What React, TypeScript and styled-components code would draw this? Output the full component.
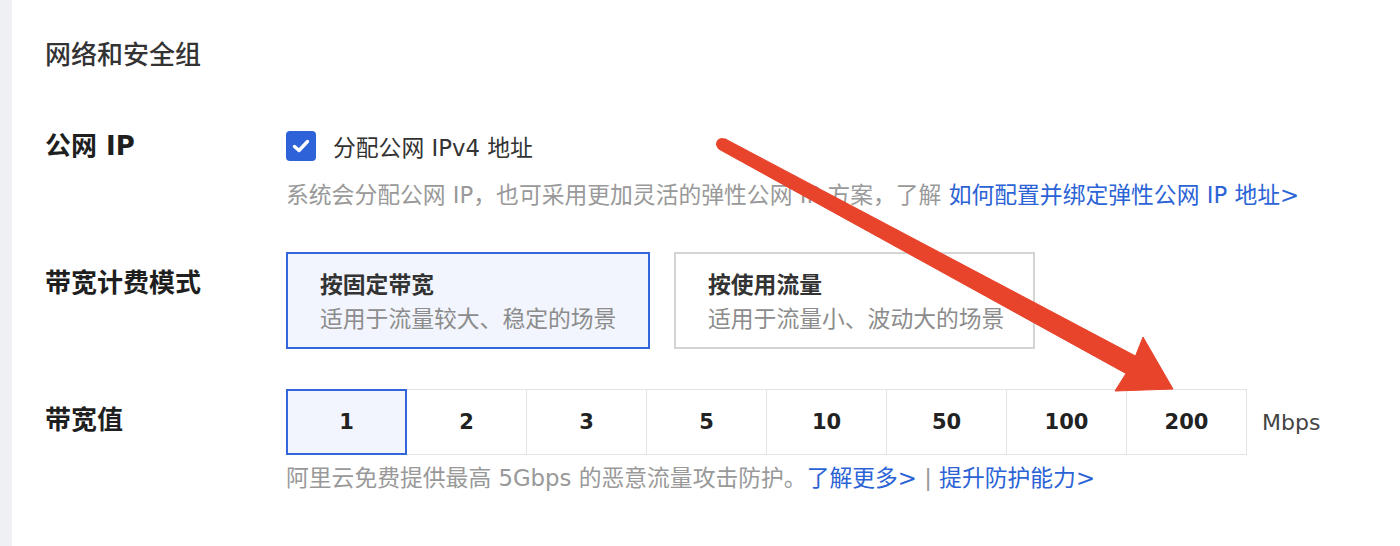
import React, { FC, useState } from 'react';
import styled, { createGlobalStyle } from 'styled-components';

const GlobalStyle = createGlobalStyle`
    html, body {
        margin: 0;
        padding: 0;
        background: #ffffff;
    }
    body {
        font-family: "DejaVu Sans", "Noto Sans CJK SC", sans-serif;
        color: #333333;
    }
`;

const bandwidthOptions = [1, 2, 3, 5, 10, 50, 100, 200];

const billingModes = [
    { key: 'fixed', title: '按固定带宽', desc: '适用于流量较大、稳定的场景' },
    { key: 'traffic', title: '按使用流量', desc: '适用于流量小、波动大的场景' },
];

const App: FC = () => {
    const [assignIp, setAssignIp] = useState(true);
    const [mode, setMode] = useState('fixed');
    const [bandwidth, setBandwidth] = useState(1);

    return (<Page>
        <GlobalStyle />
        <SideStrip />

        <Content>
            <SectionTitle>网络和安全组</SectionTitle>

            {/* public ip */}
            <FormRow>
                <Label>公网 IP</Label>
                <Field>
                    <CheckLine onClick={() => setAssignIp(!assignIp)}>
                        <CheckBox checked={assignIp}>
                            {assignIp && (
                                <svg width="22" height="22" viewBox="0 0 22 22">
                                    <path d="M4.5 11.5 L9 15.5 L17.5 6.5" fill="none" stroke="#fff" strokeWidth="3.4" strokeLinecap="round" strokeLinejoin="round" />
                                </svg>
                            )}
                        </CheckBox>
                        <span>分配公网 IPv4 地址</span>
                    </CheckLine>
                    <Hint $top={15}>
                        系统会分配公网 IP，也可采用更加灵活的弹性公网 IP 方案，了解 <Link>如何配置并绑定弹性公网 IP 地址&gt;</Link>
                    </Hint>
                </Field>
            </FormRow>

            {/* billing mode */}
            <FormRow $top={41}>
                <Label $offset={13}>带宽计费模式</Label>
                <Field>
                    <CardGroup>
                        {billingModes.map(m => (
                            <ModeCard key={m.key} active={mode === m.key} onClick={() => setMode(m.key)}>
                                <CardTitle>{m.title}</CardTitle>
                                <CardDesc>{m.desc}</CardDesc>
                            </ModeCard>
                        ))}
                    </CardGroup>
                </Field>
            </FormRow>

            {/* bandwidth value */}
            <FormRow $top={40}>
                <Label $offset={13}>带宽值</Label>
                <Field>
                    <ValueLine>
                        <ValueGroup>
                            {bandwidthOptions.map(v => (
                                <ValueCell key={v} active={bandwidth === v} onClick={() => setBandwidth(v)}>
                                    {v}
                                </ValueCell>
                            ))}
                        </ValueGroup>
                        <Unit>Mbps</Unit>
                    </ValueLine>
                    <Hint $top={7}>
                        阿里云免费提供最高 5Gbps 的恶意流量攻击防护。<Link>了解更多&gt;</Link> <Divider>|</Divider> <Link>提升防护能力&gt;</Link>
                    </Hint>
                </Field>
            </FormRow>
        </Content>

        {/* annotation arrow drawn over the form */}
        <Overlay width="1400" height="546" viewBox="0 0 1400 546">
            <circle cx="722" cy="144" r="6" fill="#e8432b" />
            <path
                d="M724.8 138.7 L1135.5 356 L1143 337 L1173 389 L1115 391 L1126 373.5 L719.2 149.3 Z"
                fill="#e8432b"
                stroke="#e8432b"
                strokeWidth="1"
                strokeLinejoin="round"
            />
        </Overlay>
    </Page>);
}

export default App;

const Page = styled.div`
    position: relative;
    display: flex;
    width: 1400px;
    height: 546px;
    overflow: hidden;
    background: #ffffff;
`;

const SideStrip = styled.div`
    width: 12px;
    flex-shrink: 0;
    background: #eef0f3;
`;

const Content = styled.div`
    flex: 1;
    padding: 37px 0 0 33px;
    box-sizing: border-box;
`;

const SectionTitle = styled.div`
    font-size: 26px;
    line-height: 36px;
    font-weight: 500;
    color: #333333;
    margin-bottom: 55px;
`;

const FormRow = styled.div<{ $top?: number }>`
    display: flex;
    align-items: flex-start;
    margin-top: ${props => props.$top || 0}px;
`;

const Label = styled.div<{ $offset?: number }>`
    width: 241px;
    flex-shrink: 0;
    font-size: 26px;
    line-height: 36px;
    font-weight: 700;
    color: #1f1f1f;
    padding-top: ${props => props.$offset || 0}px;
`;

const Field = styled.div`
    display: flex;
    flex-direction: column;
`;

const CheckLine = styled.label`
    display: flex;
    align-items: center;
    gap: 17px;
    height: 36px;
    font-size: 22.8px;
    color: #333333;
    cursor: pointer;
`;

const CheckBox = styled.span<{ checked: boolean }>`
    display: flex;
    align-items: center;
    justify-content: center;
    width: 30px;
    height: 30px;
    box-sizing: border-box;
    border-radius: 4px;
    background: ${props => props.checked ? '#2e62d9' : '#ffffff'};
    border: ${props => props.checked ? 'none' : '2px solid #c8c8c8'};
`;

const Hint = styled.div<{ $top?: number }>`
    margin-top: ${props => props.$top || 0}px;
    font-size: 22.8px;
    line-height: 32px;
    color: #999999;
    white-space: nowrap;
`;

const Link = styled.a`
    color: #2b63d6;
    cursor: pointer;
`;

const Divider = styled.span`
    color: #999999;
`;

const CardGroup = styled.div`
    display: flex;
    gap: 24px;
`;

const ModeCard = styled.div<{ active: boolean }>`
    width: 364px;
    height: 97px;
    box-sizing: border-box;
    padding: 15px 0 0 32px;
    border: 2px solid ${props => props.active ? '#3166dc' : '#d4d4d4'};
    background: ${props => props.active ? '#f2f5fd' : '#ffffff'};
    cursor: pointer;

    & + &{
        width: 361px;
    }
`;

const CardTitle = styled.div`
    font-size: 22.8px;
    line-height: 32px;
    font-weight: 600;
    color: #333333;
`;

const CardDesc = styled.div`
    margin-top: 2px;
    font-size: 22.8px;
    line-height: 32px;
    color: #8c8c8c;
`;

const ValueLine = styled.div`
    display: flex;
    align-items: center;
    gap: 15px;
`;

const ValueGroup = styled.div`
    display: flex;
`;

const ValueCell = styled.div<{ active: boolean }>`
    width: 121px;
    height: 66px;
    box-sizing: border-box;
    display: flex;
    align-items: center;
    justify-content: center;
    margin-left: -1px;
    font-size: 21px;
    font-weight: 600;
    color: #222222;
    border: ${props => props.active ? '2px solid #3166dc' : '1px solid #e3e3e3'};
    background: ${props => props.active ? '#f2f5fd' : '#ffffff'};
    position: relative;
    z-index: ${props => props.active ? 1 : 0};
    cursor: pointer;

    &:first-child{
        margin-left: 0;
    }
`;

const Unit = styled.span`
    font-size: 22px;
    color: #444444;
`;

const Overlay = styled.svg`
    position: absolute;
    top: 0;
    left: 0;
    pointer-events: none;
`;
